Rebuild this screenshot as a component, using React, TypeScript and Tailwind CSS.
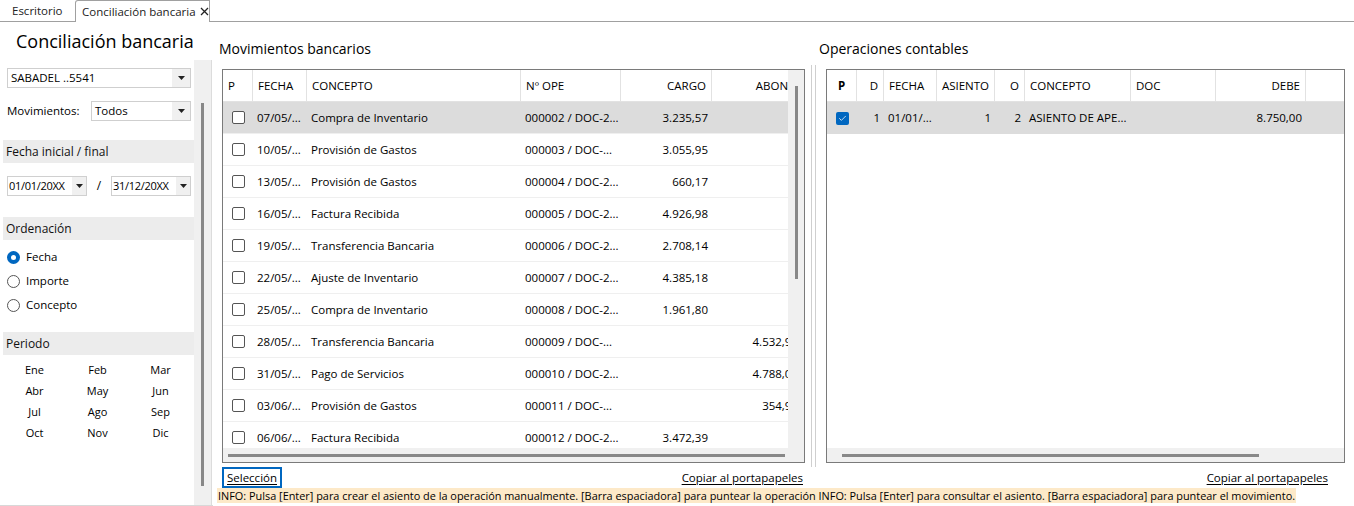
import { Check } from "lucide-react";

const FONT = { fontFamily: '"Open Sans", "Noto Sans", sans-serif' };

type Mov = { fecha: string; concepto: string; ope: string; cargo?: string; abono?: string };

const MOVIMIENTOS: Mov[] = [
  { fecha: "07/05/...", concepto: "Compra de Inventario", ope: "000002 / DOC-2...", cargo: "3.235,57" },
  { fecha: "10/05/...", concepto: "Provisión de Gastos", ope: "000003 / DOC-...", cargo: "3.055,95" },
  { fecha: "13/05/...", concepto: "Provisión de Gastos", ope: "000004 / DOC-2...", cargo: "660,17" },
  { fecha: "16/05/...", concepto: "Factura Recibida", ope: "000005 / DOC-2...", cargo: "4.926,98" },
  { fecha: "19/05/...", concepto: "Transferencia Bancaria", ope: "000006 / DOC-2...", cargo: "2.708,14" },
  { fecha: "22/05/...", concepto: "Ajuste de Inventario", ope: "000007 / DOC-2...", cargo: "4.385,18" },
  { fecha: "25/05/...", concepto: "Compra de Inventario", ope: "000008 / DOC-2...", cargo: "1.961,80" },
  { fecha: "28/05/...", concepto: "Transferencia Bancaria", ope: "000009 / DOC-...", abono: "4.532,90" },
  { fecha: "31/05/...", concepto: "Pago de Servicios", ope: "000010 / DOC-2...", abono: "4.788,00" },
  { fecha: "03/06/...", concepto: "Provisión de Gastos", ope: "000011 / DOC-...", abono: "354,90" },
  { fecha: "06/06/...", concepto: "Factura Recibida", ope: "000012 / DOC-2...", cargo: "3.472,39" },
];

const MESES = ["Ene", "Feb", "Mar", "Abr", "May", "Jun", "Jul", "Ago", "Sep", "Oct", "Nov", "Dic"];

function Arrow() {
  return (
    <svg width="7" height="4" viewBox="0 0 7 4">
      <path d="M0 0h7L3.5 4z" fill="#222" />
    </svg>
  );
}

function Select({ value, className = "", small = false }: { value: string; className?: string; small?: boolean }) {
  return (
    <div className={`flex h-[20px] items-center border border-[#cfcfcf] bg-white ${className}`}>
      <span className={`flex-1 overflow-hidden whitespace-nowrap text-black ${small ? "pl-[1px] text-[11px] tracking-[-0.3px]" : "pl-[3px] text-[11.5px]"}`}>{value}</span>
      <span className={`flex h-full shrink-0 items-center justify-center bg-[#f0f0f0] ${small ? "w-[14px]" : "w-[18px]"}`}>
        <Arrow />
      </span>
    </div>
  );
}

function SectionHeader({ children }: { children: string }) {
  return (
    <div className="ml-[3px] flex h-[23px] items-center bg-[#ececec] pl-[3px] text-[12px] text-[#111]">
      {children}
    </div>
  );
}

function Radio({ label, checked = false }: { label: string; checked?: boolean }) {
  return (
    <div className="flex h-[24px] items-center gap-[6px] pl-[7px] text-[11.5px] text-black">
      {checked ? (
        <span className="flex h-[13px] w-[13px] items-center justify-center rounded-full bg-[#0067c0]">
          <span className="h-[5px] w-[5px] rounded-full bg-white" />
        </span>
      ) : (
        <span className="h-[13px] w-[13px] rounded-full border border-[#555] bg-white" />
      )}
      {label}
    </div>
  );
}

function Checkbox({ checked = false }: { checked?: boolean }) {
  return checked ? (
    <span className="flex h-[13px] w-[13px] items-center justify-center rounded-[2px] bg-[#0067c0]">
      <Check size={9} color="#fff" strokeWidth={2} />
    </span>
  ) : (
    <span className="h-[13px] w-[13px] rounded-[2px] border border-[#555] bg-white" />
  );
}

function LeftPanel() {
  return (
    <div className="flex h-full w-[213px] shrink-0 border-b border-[#d8d8d8]">
      <div className="flex w-[194px] flex-col">
        <div className="flex h-[38px] items-center whitespace-nowrap pl-[16px] text-[18px] text-black">Conciliación bancaria</div>
        <div className="h-[8px]" />
        <Select value="SABADEL ..5541" className="ml-[7px] w-[184px]" />
        <div className="mt-[13px] flex items-center">
          <span className="w-[91px] pl-[7px] text-[11.5px] text-black">Movimientos:</span>
          <Select value="Todos" className="w-[100px]" />
        </div>
        <div className="h-[19px]" />
        <SectionHeader>Fecha inicial / final</SectionHeader>
        <div className="mt-[13px] flex items-center">
          <Select small value="01/01/20XX" className="ml-[7px] w-[80px] border-[#d0d0d0]" />
          <span className="w-[24px] text-center text-[12px] text-black">/</span>
          <Select small value="31/12/20XX" className="w-[80px]" />
        </div>
        <div className="h-[21px]" />
        <SectionHeader>Ordenación</SectionHeader>
        <div className="mt-[5px]">
          <Radio label="Fecha" checked />
          <Radio label="Importe" />
          <Radio label="Concepto" />
        </div>
        <div className="h-[15px]" />
        <SectionHeader>Periodo</SectionHeader>
        <div className="mt-[5px] grid grid-cols-3 gap-y-0 pl-[3px] pr-[2px]">
          {MESES.map((m) => (
            <div key={m} className="flex h-[21px] items-center justify-center text-[11px] text-black">
              {m}
            </div>
          ))}
        </div>
      </div>
      <div className="mt-[38px] flex w-[18px] justify-center border-r border-[#dcdcdc] bg-[#f0f0f0]">
        <div className="mt-[43px] mb-[19px] w-[3px] bg-[#888]" />
      </div>
    </div>
  );
}

function HeadCell({ w, children, right = false, bold = false, line = true }: { w: number; children?: string; right?: boolean; bold?: boolean; line?: boolean }) {
  return (
    <div
      className={`flex h-full shrink-0 items-center px-[5px] ${right ? "justify-end" : ""} ${bold ? "font-bold" : ""} ${line ? "border-r border-[#e2e2e2]" : ""}`}
      style={{ width: w }}
    >
      <span className="whitespace-nowrap">{children}</span>
    </div>
  );
}

function Cell({ w, children, right = false }: { w: number; children?: React.ReactNode; right?: boolean }) {
  return (
    <div
      className={`flex h-full shrink-0 items-center px-[4px] ${right ? "justify-end" : ""}`}
      style={{ width: w }}
    >
      <span className="whitespace-nowrap">{children}</span>
    </div>
  );
}

function HScroll({ left, width }: { left: number; width: number }) {
  return (
    <div className="relative h-[14px] shrink-0 bg-[#f0f0f0]">
      <div className="absolute top-[6px] h-[3px] bg-[#888]" style={{ left, width }} />
    </div>
  );
}

function MovimientosTable() {
  const cols = [30, 54, 214, 100, 91, 90];
  return (
    <div className="flex h-[394px] flex-col border border-[#7a7a7a] bg-white text-[11.5px] text-black">
      <div className="flex min-h-0 flex-1">
        <div className="min-w-0 flex-1 overflow-hidden">
          <div className="flex h-[32px] border-b border-[#e2e2e2]">
            <HeadCell w={cols[0]}>P</HeadCell>
            <HeadCell w={cols[1]}>FECHA</HeadCell>
            <HeadCell w={cols[2]}>CONCEPTO</HeadCell>
            <HeadCell w={cols[3]}>Nº OPE</HeadCell>
            <HeadCell w={cols[4]} right>CARGO</HeadCell>
            <HeadCell w={cols[5]} right line={false}>ABONO</HeadCell>
          </div>
          {MOVIMIENTOS.map((r, i) => (
            <div key={i} className={`flex h-[32px] border-b border-[#efefef] ${i === 0 ? "bg-[#dcdcdc]" : ""}`}>
              <div className="flex h-full w-[30px] shrink-0 items-center justify-center">
                <Checkbox />
              </div>
              <Cell w={cols[1]}>{r.fecha}</Cell>
              <Cell w={cols[2]}>{r.concepto}</Cell>
              <Cell w={cols[3]}>{r.ope}</Cell>
              <Cell w={cols[4]} right>{r.cargo}</Cell>
              <Cell w={cols[5]} right>{r.abono}</Cell>
            </div>
          ))}
        </div>
        <div className="flex w-[16px] shrink-0 justify-center bg-[#f0f0f0]">
          <div className="mt-[16px] h-[193px] w-[3px] bg-[#888]" />
        </div>
      </div>
      <HScroll left={5} width={557} />
    </div>
  );
}

function OperacionesTable() {
  return (
    <div className="flex h-[394px] flex-col border border-[#7a7a7a] bg-white text-[11.5px] text-black">
      <div className="min-h-0 flex-1 overflow-hidden">
        <div className="flex h-[32px] border-b border-[#e2e2e2]">
          <div className="flex h-full w-[30px] shrink-0 items-center justify-center border-r border-[#e2e2e2] font-bold">P</div>
          <HeadCell w={27} right>D</HeadCell>
          <HeadCell w={53}>FECHA</HeadCell>
          <HeadCell w={58} right>ASIENTO</HeadCell>
          <HeadCell w={30} right>O</HeadCell>
          <HeadCell w={106}>CONCEPTO</HeadCell>
          <HeadCell w={85}>DOC</HeadCell>
          <HeadCell w={90} right>DEBE</HeadCell>
        </div>
        <div className="flex h-[32px] bg-[#dcdcdc]">
          <div className="flex h-full w-[30px] shrink-0 items-center justify-center">
            <Checkbox checked />
          </div>
          <Cell w={27} right>1</Cell>
          <Cell w={53}>01/01/...</Cell>
          <Cell w={58} right>1</Cell>
          <Cell w={30} right>2</Cell>
          <Cell w={106}>ASIENTO DE APE...</Cell>
          <Cell w={85}></Cell>
          <Cell w={90} right>8.750,00</Cell>
        </div>
      </div>
      <HScroll left={15} width={417} />
    </div>
  );
}

function LinkText({ children }: { children: string }) {
  return (
    <div className="flex h-[21px] items-center">
      <span className="text-[11.5px] text-black underline underline-offset-2">{children}</span>
    </div>
  );
}

export default function App() {
  return (
    <div className="h-[506px] w-[1354px] overflow-hidden bg-white" style={FONT}>
      {/* Tabs */}
      <div className="flex h-[22px] items-end border-b border-[#a0a0a0]">
        <div className="flex h-[21px] w-[75px] items-center pl-[12px] text-[11.5px] text-[#222]">Escritorio</div>
        <div className="mb-[-1px] flex h-[22px] w-[135px] items-center gap-[4px] rounded-tl-[3px] border border-b-0 border-[#a0a0a0] bg-white pl-[6px] text-[11.5px] text-[#222]">
          Conciliación bancaria
          <svg width="9" height="9" viewBox="0 0 9 9">
            <path d="M1 1l7 7M8 1l-7 7" stroke="#222" strokeWidth="1.3" />
          </svg>
        </div>
      </div>

      <div className="flex h-[484px]">
        <LeftPanel />

        <div className="flex min-w-0 flex-1 flex-col">
          <div className="flex">
            {/* Movimientos bancarios */}
            <div className="flex w-[594px] shrink-0 flex-col">
              <div className="flex h-[47px] items-center pl-[6px] pt-[5px] text-[14px] text-black">Movimientos bancarios</div>
              <div className="ml-[9px] mr-[2px]">
                <MovimientosTable />
              </div>
              <div className="flex h-[25px] items-end justify-between pl-[9px] pr-[4px]">
                <div className="flex h-[21px] w-[60px] items-center justify-center border-2 border-[#0067c0] text-[11.5px] text-black underline underline-offset-2">
                  Selección
                </div>
                <LinkText>Copiar al portapapeles</LinkText>
              </div>
            </div>

            {/* Splitter */}
            <div className="mt-[43px] flex h-[402px] w-[12px] shrink-0 justify-center gap-[3px]">
              <div className="w-px bg-[#cfcfcf]" />
              <div className="w-px bg-[#cfcfcf]" />
            </div>

            {/* Operaciones contables */}
            <div className="flex min-w-0 flex-1 flex-col">
              <div className="flex h-[47px] items-center pt-[5px] text-[14px] text-black">Operaciones contables</div>
              <div className="ml-[7px] mr-[9px]">
                <OperacionesTable />
              </div>
              <div className="flex h-[25px] items-end justify-end pr-[26px]">
                <LinkText>Copiar al portapapeles</LinkText>
              </div>
            </div>
          </div>

          <div className="flex pl-[4px]">
            <span className="whitespace-nowrap bg-[#fde9c8] px-[1px] text-[10.9px] leading-[15px] text-black">
              INFO: Pulsa [Enter] para crear el asiento de la operación manualmente. [Barra espaciadora] para puntear la operación INFO: Pulsa [Enter] para consultar el asiento. [Barra espaciadora] para puntear el movimiento.
            </span>
          </div>
        </div>
      </div>
    </div>
  );
}
